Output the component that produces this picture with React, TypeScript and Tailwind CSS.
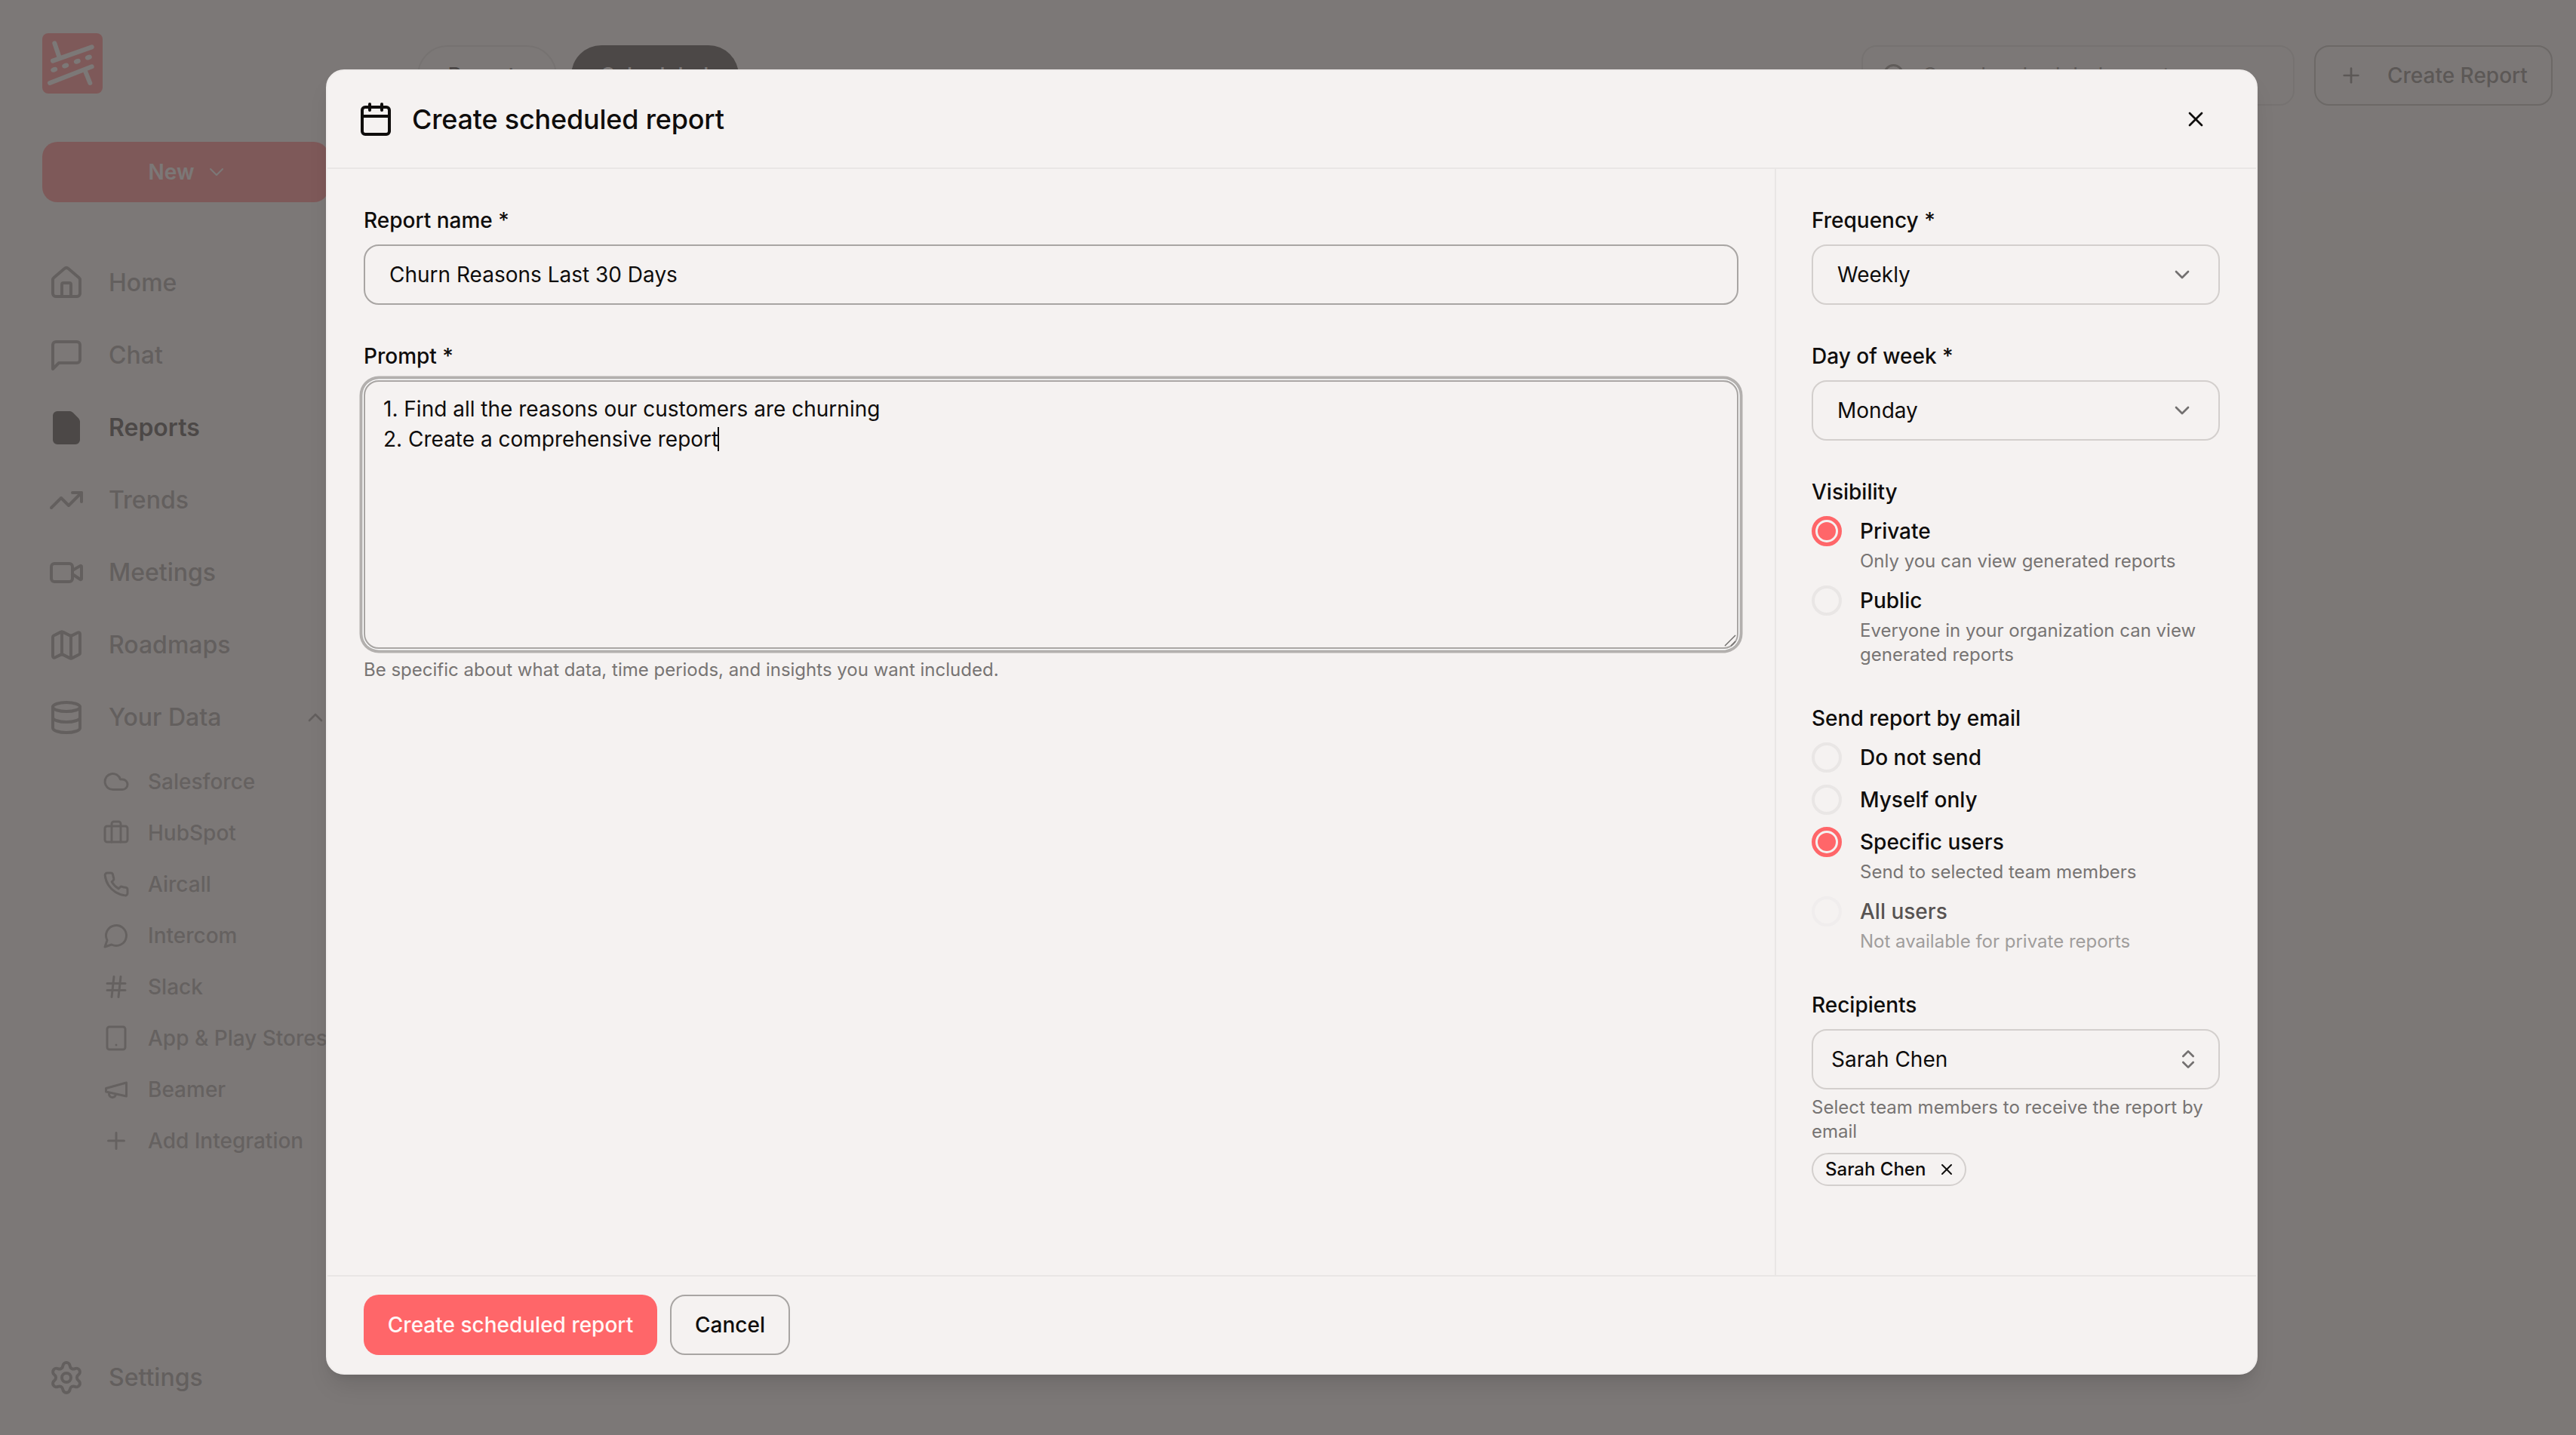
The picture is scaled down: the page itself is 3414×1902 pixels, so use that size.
import React from "react";
import {
  House, File, TrendingUp, Video, Map as MapIcon, Database, Cloud, Briefcase,
  Hash, Tablet, Plus, Settings, ChevronDown, ChevronUp, ChevronsUpDown,
  Calendar, X, Search,
} from "lucide-react";

type IconProps = { size?: number; strokeWidth?: number; className?: string; fill?: string };

function StrokeIcon({ size = 24, strokeWidth = 2, className, fill = "none", children }: IconProps & { children: React.ReactNode }) {
  return (
    <svg width={size} height={size} viewBox="0 0 24 24" fill={fill} stroke="currentColor" strokeWidth={strokeWidth} strokeLinecap="round" strokeLinejoin="round" className={className}>
      {children}
    </svg>
  );
}

const ChatSquare = (p: IconProps) => (
  <StrokeIcon {...p}>
    <path d="M21 15a2 2 0 0 1-2 2H7l-4 4V5a2 2 0 0 1 2-2h14a2 2 0 0 1 2 2z" />
  </StrokeIcon>
);
const PhoneOld = (p: IconProps) => (
  <StrokeIcon {...p}>
    <path d="M22 16.92v3a2 2 0 0 1-2.18 2 19.79 19.79 0 0 1-8.63-3.07 19.5 19.5 0 0 1-6-6 19.79 19.79 0 0 1-3.07-8.67A2 2 0 0 1 4.11 2h3a2 2 0 0 1 2 1.72 12.84 12.84 0 0 0 .7 2.81 2 2 0 0 1-.45 2.11L8.09 9.91a16 16 0 0 0 6 6l1.27-1.27a2 2 0 0 1 2.11-.45 12.84 12.84 0 0 0 2.81.7A2 2 0 0 1 22 16.92z" />
  </StrokeIcon>
);
const BubbleRound = (p: IconProps) => (
  <StrokeIcon {...p}>
    <path d="M7.9 20A9 9 0 1 0 4 16.1L2 22Z" />
  </StrokeIcon>
);
const MegaphoneOld = (p: IconProps) => (
  <StrokeIcon {...p}>
    <path d="m3 11 18-5v12L3 14v-3z" />
    <path d="M11.6 16.8a3 3 0 1 1-5.8-1.6" />
  </StrokeIcon>
);

const mainNav = [
  { label: "Home", Icon: House },
  { label: "Chat", Icon: ChatSquare },
  { label: "Reports", Icon: File, active: true },
  { label: "Trends", Icon: TrendingUp },
  { label: "Meetings", Icon: Video },
  { label: "Roadmaps", Icon: MapIcon },
];

const subNav = [
  { label: "Salesforce", Icon: Cloud },
  { label: "HubSpot", Icon: Briefcase },
  { label: "Aircall", Icon: PhoneOld },
  { label: "Intercom", Icon: BubbleRound },
  { label: "Slack", Icon: Hash },
  { label: "App & Play Stores", Icon: Tablet },
  { label: "Beamer", Icon: MegaphoneOld },
  { label: "Add Integration", Icon: Plus },
];

function Logo() {
  return (
    <div className="h-[80px] w-[80px] rounded-[8px] bg-[#ff6669]">
      <svg viewBox="0 0 80 80" className="h-full w-full" fill="none" stroke="#f5f2f1" strokeWidth="6" strokeLinecap="round">
        <path d="M14 36.7 65.7 18.3" />
        <path d="M16.3 13.3 22.3 31" />
        <path d="M10 66 65.7 44.3" />
        <path d="M57.3 51 63.3 66" />
        <g fill="#f5f2f1" stroke="none">
          <ellipse cx="15.7" cy="48.3" rx="4.6" ry="3.2" transform="rotate(-20 15.7 48.3)" />
          <ellipse cx="30.7" cy="43" rx="4.6" ry="3.2" transform="rotate(-20 30.7 43)" />
          <ellipse cx="46.3" cy="37.3" rx="4.6" ry="3.2" transform="rotate(-20 46.3 37.3)" />
          <ellipse cx="61.3" cy="32" rx="4.6" ry="3.2" transform="rotate(-20 61.3 32)" />
        </g>
      </svg>
    </div>
  );
}

function Sidebar() {
  return (
    <aside className="flex h-full w-[492px] shrink-0 flex-col pl-[56px] pr-[56px] pt-[44px] pb-[36px]">
      <Logo />
      <button className="mt-[64px] flex h-[80px] w-[380px] items-center justify-center gap-[14px] rounded-[20px] bg-[#ff6669] pl-[8px] text-[28px] font-semibold text-[#f5f2f1]">
        New
        <ChevronDown size={32} strokeWidth={1.5} />
      </button>
      <nav className="mt-[67px] flex flex-col gap-[16px]">
        {mainNav.map(({ label, Icon, active }) => (
          <div key={label} className={active ? "flex h-[80px] items-center gap-[32px] px-[8px] text-[32px] font-semibold text-[#1c1917]" : "flex h-[80px] items-center gap-[32px] px-[8px] text-[32px] font-medium text-[#84807e]"}>
            <Icon size={48} strokeWidth={2} fill={active ? "currentColor" : "none"} />
            {label}
          </div>
        ))}
        <div className="flex h-[80px] items-center gap-[32px] px-[8px] text-[32px] font-medium text-[#84807e]">
          <Database size={48} strokeWidth={2} />
          <span className="flex-1">Your Data</span>
          <ChevronUp size={32} strokeWidth={2} className="mr-[-6px]" />
        </div>
      </nav>
      <div className="mt-[15px] flex flex-col gap-[8px]">
        {subNav.map(({ label, Icon }) => (
          <div key={label} className="flex h-[60px] items-center gap-[24px] whitespace-nowrap pl-[80px] text-[28px] font-medium text-[#8f8b89]">
            <Icon size={36} strokeWidth={2} className="shrink-0" />
            {label}
          </div>
        ))}
      </div>
      <div className="mt-auto flex h-[80px] items-center gap-[32px] px-[8px] text-[32px] font-medium text-[#84807e]">
        <Settings size={48} strokeWidth={2} />
        Settings
      </div>
    </aside>
  );
}

function TopBar() {
  return (
    <main className="flex min-w-0 flex-1 items-start justify-between pl-[61px] pr-[31px] pt-[60px]">
      <div className="flex gap-[19px]">
        <div className="flex h-[80px] w-[185px] items-center justify-center rounded-[40px] border-2 border-[#d9d6d4] text-[28px] font-medium text-[#1c1917]">Reports</div>
        <div className="flex h-[80px] w-[222px] items-center justify-center rounded-[40px] bg-[#1c1917] text-[28px] font-medium text-[#f5f2f1]">Scheduled</div>
      </div>
      <div className="flex gap-[26px]">
        <div className="flex h-[80px] w-[574px] items-center gap-[20px] rounded-[20px] border-2 border-[#d9d6d4] pl-[24px] text-[28px] text-[#78716c]">
          <Search size={36} strokeWidth={2} />
          Search scheduled reports
        </div>
        <div className="flex h-[80px] w-[316px] items-center gap-[32px] rounded-[20px] border-2 border-[#aba8a6] pl-[31px] text-[28px] font-medium text-[#64605e]">
          <Plus size={32} strokeWidth={2} />
          Create Report
        </div>
      </div>
    </main>
  );
}

function FieldLabel({ children }: { children: React.ReactNode }) {
  return <div className="mb-[12px] h-[40px] text-[28px] font-medium leading-[40px] text-[#0f0d0c]">{children}</div>;
}

function SelectBox({ value }: { value: string }) {
  return (
    <div className="flex h-[80px] items-center justify-between rounded-[20px] border-2 border-[#d3cfcd] pl-[32px] pr-[32px] text-[28px] text-[#0f0d0c]">
      {value}
      <ChevronDown size={32} strokeWidth={2} className="text-[#737070]" />
    </div>
  );
}

function Radio({ on, disabled }: { on?: boolean; disabled?: boolean }) {
  if (on) {
    return (
      <span className="flex h-[40px] w-[40px] shrink-0 items-center justify-center rounded-full border-[5px] border-[#ff6669]">
        <span className="h-[24px] w-[24px] rounded-full bg-[#ff6669]" />
      </span>
    );
  }
  return <span className={disabled ? "h-[40px] w-[40px] shrink-0 rounded-full border-[4px] border-[#f0eded]" : "h-[40px] w-[40px] shrink-0 rounded-full border-[4px] border-[#e9e6e5]"} />;
}

function Option({ label, sub, on, disabled }: { label: string; sub?: string; on?: boolean; disabled?: boolean }) {
  return (
    <div className="flex gap-[24px]">
      <Radio on={on} disabled={disabled} />
      <div className="min-w-0 flex-1">
        <div className={disabled ? "h-[40px] text-[28px] font-medium leading-[40px] text-[#575352]" : "h-[40px] text-[28px] font-medium leading-[40px] text-[#0f0d0c]"}>{label}</div>
        {sub && <div className={disabled ? "mt-[4px] text-[24px] leading-[32px] text-[#a09d9c]" : "mt-[4px] text-[24px] leading-[32px] text-[#777473]"}>{sub}</div>}
      </div>
    </div>
  );
}

function Modal() {
  return (
    <div className="absolute left-[432px] top-[92px] flex h-[1730px] w-[2560px] flex-col rounded-[24px] border-2 border-[#f0edec] bg-[#f5f2f1] shadow-[0_20px_30px_-6px_rgba(0,0,0,0.1),0_8px_12px_-8px_rgba(0,0,0,0.1)]">
      <header className="flex h-[130px] shrink-0 items-center justify-between border-b-2 border-[#e9e6e5] pl-[40px] pr-[64px]">
        <div className="flex items-center gap-[24px] text-[36px] font-medium tracking-[-0.2px] text-[#0f0d0c]">
          <Calendar size={48} strokeWidth={2} />
          Create scheduled report
        </div>
        <X size={32} strokeWidth={2} className="text-[#0f0d0c]" />
      </header>
      <div className="flex min-h-0 flex-1">
        <section className="flex-1 pl-[48px] pr-[48px] pt-[48px]">
          <FieldLabel>Report name *</FieldLabel>
          <div className="flex h-[80px] items-center rounded-[20px] border-2 border-[#a8a5a3] pl-[32px] text-[28px] text-[#0f0d0c]">Churn Reasons Last 30 Days</div>
          <div className="mt-[48px]">
            <FieldLabel>Prompt *</FieldLabel>
          </div>
          <div className="relative h-[356px] whitespace-pre-wrap rounded-[20px] border-2 border-[#a8a5a3] px-[24px] py-[16px] text-[28px] leading-[40px] text-[#0f0d0c] shadow-[0_0_0_1.5px_#ffffff,0_0_0_5.5px_#b3b0ae]">
            <div>1. Find all the reasons our customers are churning</div>
            <div>
              2. Create a comprehensive report
              <span className="ml-[-1px] inline-block h-[32px] w-[2px] bg-[#0f0d0c] align-[-6px]" />
            </div>
            <svg viewBox="0 0 16 16" className="absolute bottom-[1px] right-[1px] h-[16px] w-[16px]" fill="none" stroke="#6f6c6b" strokeWidth="1.4">
              <path d="M1 15 15 1" />
              <path d="M9 15 15 9" />
            </svg>
          </div>
          <div className="mt-[12px] text-[24px] leading-[32px] text-[#777473]">Be specific about what data, time periods, and insights you want included.</div>
        </section>
        <aside className="w-[638px] shrink-0 border-l-2 border-[#e9e6e5] pl-[47px] pr-[48px] pt-[48px]">
          <FieldLabel>Frequency *</FieldLabel>
          <SelectBox value="Weekly" />
          <div className="mt-[48px]">
            <FieldLabel>Day of week *</FieldLabel>
            <SelectBox value="Monday" />
          </div>
          <div className="mt-[48px]">
            <FieldLabel>Visibility</FieldLabel>
            <div className="flex flex-col gap-[16px]">
              <Option on label="Private" sub="Only you can view generated reports" />
              <Option label="Public" sub="Everyone in your organization can view generated reports" />
            </div>
          </div>
          <div className="mt-[48px]">
            <FieldLabel>Send report by email</FieldLabel>
            <div className="flex flex-col gap-[16px]">
              <Option label="Do not send" />
              <Option label="Myself only" />
              <Option on label="Specific users" sub="Send to selected team members" />
              <Option disabled label="All users" sub="Not available for private reports" />
            </div>
          </div>
          <div className="mt-[48px]">
            <FieldLabel>Recipients</FieldLabel>
            <div className="flex h-[80px] items-center justify-between rounded-[20px] border-2 border-[#d3cfcd] pl-[24px] pr-[24px] text-[28px] text-[#0f0d0c]">
              Sarah Chen
              <ChevronsUpDown size={32} strokeWidth={2} className="text-[#737070]" />
            </div>
            <div className="mt-[8px] text-[24px] leading-[32px] text-[#777473]">Select team members to receive the report by email</div>
            <div className="mt-[12px] flex h-[44px] w-[205px] items-center justify-between rounded-full border-2 border-[#d3cfcd] pl-[16px] pr-[12px] text-[24px] font-medium text-[#0f0d0c]">
              Sarah Chen
              <X size={24} strokeWidth={2} />
            </div>
          </div>
        </aside>
      </div>
      <footer className="flex h-[130px] shrink-0 items-start gap-[17px] border-t-2 border-[#e9e6e5] pl-[48px] pt-[24px]">
        <button className="flex h-[80px] w-[389px] items-center justify-center rounded-[20px] bg-[#ff6669] text-[28px] font-medium text-[#fff7f6]">Create scheduled report</button>
        <button className="flex h-[80px] w-[159px] items-center justify-center rounded-[20px] border-2 border-[#a8a5a3] text-[28px] font-medium text-[#0f0d0c]">Cancel</button>
      </footer>
    </div>
  );
}

export default function App() {
  return (
    <div className="relative flex h-screen w-screen overflow-hidden bg-[#f5f2f1] font-[Inter,sans-serif]">
      <Sidebar />
      <TopBar />
      <div className="absolute inset-0 bg-[rgba(90,86,84,0.78)]" />
      <Modal />
    </div>
  );
}
